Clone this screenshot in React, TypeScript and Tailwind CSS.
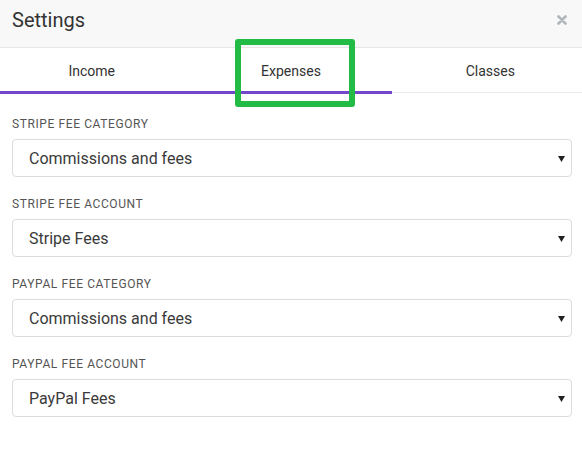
import * as React from "react"

// Settings panel — header, tabs, four fee selects

const fields = [
  { label: "Stripe Fee Category", value: "Commissions and fees" },
  { label: "Stripe Fee Account", value: "Stripe Fees" },
  { label: "PayPal Fee Category", value: "Commissions and fees" },
  { label: "PayPal Fee Account", value: "PayPal Fees" },
]

const tabs = ["Income", "Expenses", "Classes"]

function Caret() {
  return (
    <svg width="7" height="6" viewBox="0 0 7 6" className="shrink-0">
      <path d="M0 0 H7 L3.5 6 Z" fill="#222" />
    </svg>
  )
}

function CloseIcon() {
  return (
    <svg width="10" height="10" viewBox="0 0 10 10">
      <path d="M1.5 1.5 L8.5 8.5 M8.5 1.5 L1.5 8.5" stroke="#b0b5ba" strokeWidth="2.6" strokeLinecap="round" />
    </svg>
  )
}

export default function App() {
  return (
    <div
      className="relative w-[582px] h-[452px] overflow-hidden bg-white text-[#333]"
      style={{ fontFamily: "Roboto, 'Liberation Sans', sans-serif" }}
    >
      {/* Header */}
      <div className="flex h-[48px] items-center justify-between border-b border-[#e7e7ea] bg-[#f8f8f8] pb-[8px] pl-3 pr-[15px]">
        <span className="text-[20px] leading-none text-[#333]">Settings</span>
        <CloseIcon />
      </div>

      {/* Tabs */}
      <div className="relative flex h-[45px] gap-4 border-b border-[#ebebeb]">
        {tabs.map((t) => (
          <div key={t} className="flex w-[184px] items-center justify-center pt-[2px] text-[14px] text-[#333]">
            {t}
          </div>
        ))}
        <div className="absolute left-0 top-[43px] h-[3px] w-[392px] bg-[#7446cc]" />
      </div>

      {/* Fields */}
      <div className="flex flex-col gap-[19px] pl-3 pr-[10px] pt-[23px]">
        {fields.map((f) => (
          <div key={f.label} className="flex flex-col gap-[7px]">
            <div className="h-4 text-[12px] leading-4 font-normal uppercase tracking-[0.6px] text-[#555]">
              {f.label}
            </div>
            <div className="flex h-[38px] items-center justify-between rounded-[4px] border border-[#dcdcdf] bg-white pl-4 pr-[6px] pt-[1px]">
              <span className="text-[16px] text-[#3a3a3a]">{f.value}</span>
              <Caret />
            </div>
          </div>
        ))}
      </div>

      {/* Annotation box around Expenses tab */}
      <div className="absolute left-[235px] top-[39px] h-[68px] w-[120px] rounded-[3px] border-[6px] border-[#22bb45]" />
    </div>
  )
}
